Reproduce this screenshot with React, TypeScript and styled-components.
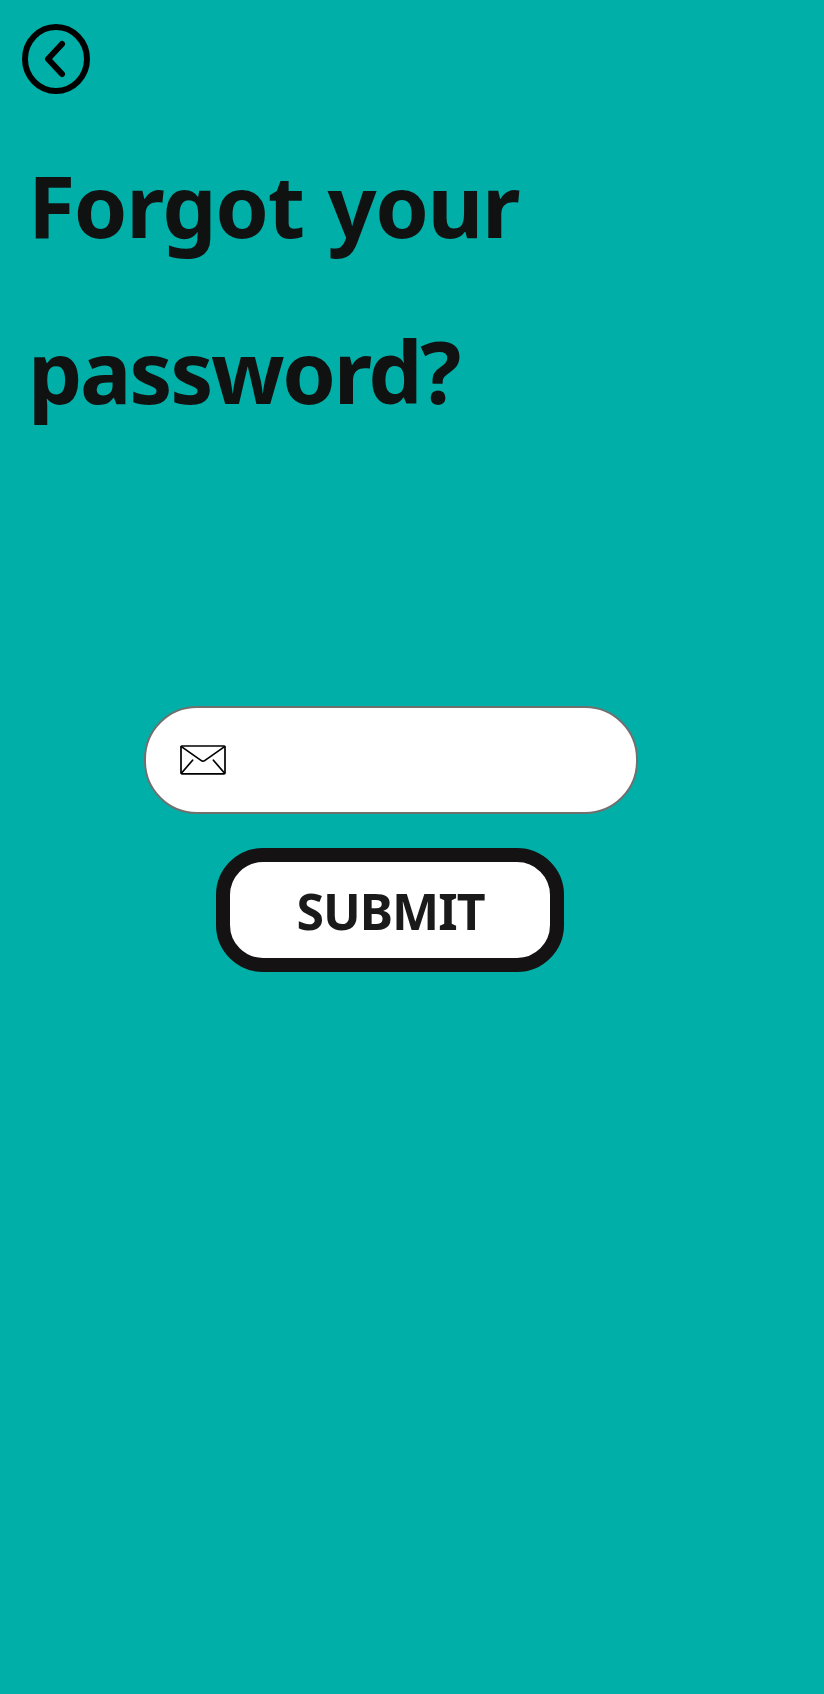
import React from "react";
import styled, { createGlobalStyle } from "styled-components";

const GlobalStyle = createGlobalStyle`
  *, *::before, *::after { box-sizing: border-box; }
  body { margin: 0; background: #00b0a8; }
`;

const Screen = styled.main`
  min-height: 1694px;
  background: #00b0a8;
  font-family: "Noto Sans", "Segoe UI", sans-serif;
  color: #101211;
`;

const BackButton = styled.button`
  display: block;
  padding: 24px 0 0 22px;
  border: 0;
  background: none;
  cursor: pointer;

  svg { display: block; }
`;

const Title = styled.h1`
  margin: 28px 0 0 28px;
  font-size: 86px;
  font-weight: 700;
  line-height: 166px;
  word-spacing: 3px;
`;

const TitleLine = styled.span<{ $spacing: number }>`
  display: block;
  letter-spacing: ${({ $spacing }) => $spacing}px;
`;

const Form = styled.form`
  display: flex;
  flex-direction: column;
  align-items: center;
  width: 780px;
  margin-top: 252px;
  gap: 34px;
`;

const EmailField = styled.label`
  display: flex;
  align-items: center;
  width: 494px;
  height: 108px;
  margin-left: 2px;
  padding: 0 32px 0 34px;
  gap: 20px;
  border: 2px solid #707070;
  border-radius: 53px;
  background: #fff;
`;

const EmailInput = styled.input`
  flex: 1;
  min-width: 0;
  height: 60px;
  border: 0;
  outline: 0;
  background: transparent;
  font: 400 32px "Noto Sans", sans-serif;
`;

const SubmitButton = styled.button`
  width: 348px;
  height: 124px;
  padding: 2px 0 0 1px;
  border: 14px solid #141213;
  border-radius: 47px;
  background: #fff;
  color: #191a19;
  font: 700 50px/94px "Noto Sans", "Segoe UI", sans-serif;
  letter-spacing: -1px;
  cursor: pointer;
`;

const BackIcon = () => (
  <svg width="68" height="70" viewBox="0 0 68 70" fill="none" stroke="#000" strokeWidth="6">
    <ellipse cx="34" cy="35" rx="31" ry="32" />
    <path d="M40 20 26 35 40 50" strokeLinecap="round" strokeLinejoin="round" />
  </svg>
);

const EnvelopeIcon = () => (
  <svg width="46" height="30" viewBox="0 0 46 30" fill="none" stroke="#000" strokeWidth="1.7" strokeLinecap="round" strokeLinejoin="round">
    <rect x="1" y="1" width="44" height="27.8" rx="1" />
    <path d="M1.4 1.6 21 15.4Q23 16.8 25 15.4L44.6 1.6M1.6 28 12.6 15.2M44.4 28 33.4 15.2" />
  </svg>
);

export default function App() {
  return (
    <Screen>
      <GlobalStyle />
      <BackButton type="button" aria-label="Back"><BackIcon /></BackButton>
      <Title>
        <TitleLine $spacing={-1.4}>Forgot your</TitleLine>
        <TitleLine $spacing={-2.3}>password?</TitleLine>
      </Title>
      <Form onSubmit={(event) => event.preventDefault()}>
        <EmailField>
          <EnvelopeIcon />
          <EmailInput type="email" aria-label="Email" />
        </EmailField>
        <SubmitButton type="submit">SUBMIT</SubmitButton>
      </Form>
    </Screen>
  );
}
